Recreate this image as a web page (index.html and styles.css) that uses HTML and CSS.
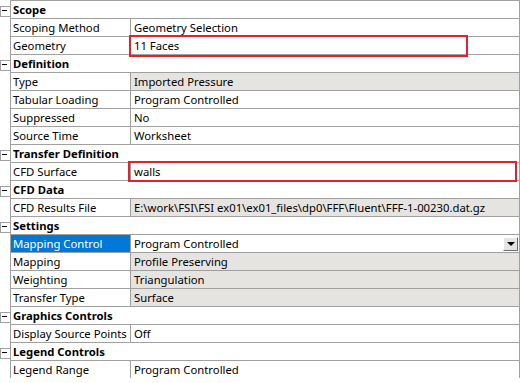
FILE: index.html
```html
<!DOCTYPE html>
<html lang="en">
<head>
    <meta charset="UTF-8">
    <title>Details</title>
    <link rel="stylesheet" href="styles.css">
</head>
<body>

    <div class="details">

        <div class="row group">
            <span class="toggle"></span>
            <div class="head">Scope</div>
        </div>
        <div class="row">
            <span class="gutter"></span>
            <div class="label">Scoping Method</div>
            <div class="value">Geometry Selection</div>
        </div>
        <div class="row">
            <span class="gutter"></span>
            <div class="label">Geometry</div>
            <div class="value">11 Faces<span class="mark mark-geometry"></span></div>
        </div>

        <div class="row group">
            <span class="toggle"></span>
            <div class="head">Definition</div>
        </div>
        <div class="row">
            <span class="gutter"></span>
            <div class="label">Type</div>
            <div class="value readonly">Imported Pressure</div>
        </div>
        <div class="row">
            <span class="gutter"></span>
            <div class="label">Tabular Loading</div>
            <div class="value">Program Controlled</div>
        </div>
        <div class="row">
            <span class="gutter"></span>
            <div class="label">Suppressed</div>
            <div class="value">No</div>
        </div>
        <div class="row">
            <span class="gutter"></span>
            <div class="label">Source Time</div>
            <div class="value">Worksheet</div>
        </div>

        <div class="row group">
            <span class="toggle"></span>
            <div class="head">Transfer Definition</div>
        </div>
        <div class="row">
            <span class="gutter"></span>
            <div class="label">CFD Surface</div>
            <div class="value">walls<span class="mark mark-surface"></span></div>
        </div>

        <div class="row group">
            <span class="toggle"></span>
            <div class="head">CFD Data</div>
        </div>
        <div class="row">
            <span class="gutter"></span>
            <div class="label">CFD Results File</div>
            <div class="value readonly">E:\work\FSI\FSI ex01\ex01_files\dp0\FFF\Fluent\FFF-1-00230.dat.gz</div>
        </div>

        <div class="row group">
            <span class="toggle"></span>
            <div class="head">Settings</div>
        </div>
        <div class="row">
            <span class="gutter"></span>
            <div class="label selected">Mapping Control</div>
            <div class="value combo">
                <span>Program Controlled</span>
                <span class="drop"></span>
            </div>
        </div>
        <div class="row">
            <span class="gutter"></span>
            <div class="label">Mapping</div>
            <div class="value readonly">Profile Preserving</div>
        </div>
        <div class="row">
            <span class="gutter"></span>
            <div class="label">Weighting</div>
            <div class="value readonly">Triangulation</div>
        </div>
        <div class="row">
            <span class="gutter"></span>
            <div class="label">Transfer Type</div>
            <div class="value readonly">Surface</div>
        </div>

        <div class="row group">
            <span class="toggle"></span>
            <div class="head">Graphics Controls</div>
        </div>
        <div class="row">
            <span class="gutter"></span>
            <div class="label">Display Source Points</div>
            <div class="value">Off</div>
        </div>

        <div class="row group">
            <span class="toggle"></span>
            <div class="head">Legend Controls</div>
        </div>
        <div class="row last">
            <span class="gutter"></span>
            <div class="label">Legend Range</div>
            <div class="value">Program Controlled</div>
        </div>

    </div>

</body>
</html>
```

FILE: styles.css
```css
* {
    margin: 0;
    padding: 0;
    box-sizing: border-box;
}

body {
    background: #ffffff;
    font-family: 'Noto Sans', 'Liberation Sans', sans-serif;
    font-size: 11.3px;
    color: #000000;
}

.details {
    width: 520px;
}

.row {
    display: flex;
    height: 18px;
}

.gutter,
.toggle {
    width: 10px;
    flex: none;
}

.toggle {
    position: relative;
}

/* the little [-] box of the tree */
.toggle::before {
    content: "";
    position: absolute;
    left: 0;
    top: 6px;
    width: 9px;
    height: 9px;
    border: 1px solid #a0a0a0;
    background: #ffffff;
}

.toggle::after {
    content: "";
    position: absolute;
    left: 2px;
    top: 10px;
    width: 5px;
    height: 1px;
    background: #000000;
}

.head,
.label,
.value {
    border-top: 1px solid #a0a0a0;
    border-left: 1px solid #a0a0a0;
    line-height: 17px;
    white-space: nowrap;
    overflow: visible;
}

.head {
    flex: 1;
    font-weight: bold;
    padding-left: 2px;
    border-right: 1px solid #a0a0a0;
}

.label {
    width: 120px;
    flex: none;
    padding-left: 2px;
}

.label.selected {
    background: #0078d7;
    color: #ffffff;
}

.value {
    flex: 1;
    position: relative;
    padding-left: 3px;
    border-right: 1px solid #a0a0a0;
}

.value.readonly {
    background: #e6e4e0;
}

.row.last .label,
.row.last .value {
    height: 19px;
    border-bottom: 1px solid #a0a0a0;
}

.combo {
    display: flex;
    justify-content: space-between;
}

.drop {
    position: relative;
    width: 15px;
    height: 14px;
    margin-top: 2px;
    margin-right: 1px;
    background: #e4e4e4;
    border-top: 1px solid #ffffff;
    border-left: 1px solid #ffffff;
    border-right: 1px solid #6d6d6d;
    border-bottom: 1px solid #6d6d6d;
}

.drop::after {
    content: "";
    position: absolute;
    left: 3px;
    top: 4px;
    border-left: 4px solid transparent;
    border-right: 4px solid transparent;
    border-top: 4px solid #000000;
}

/* red highlight boxes drawn over the cells */
.mark {
    position: absolute;
    border: 2px solid #e3202c;
}

.mark-geometry {
    left: -2px;
    top: -2px;
    width: 339px;
    height: 22px;
}

.mark-surface {
    left: -3px;
    top: -2px;
    width: 389px;
    height: 21px;
}
```
